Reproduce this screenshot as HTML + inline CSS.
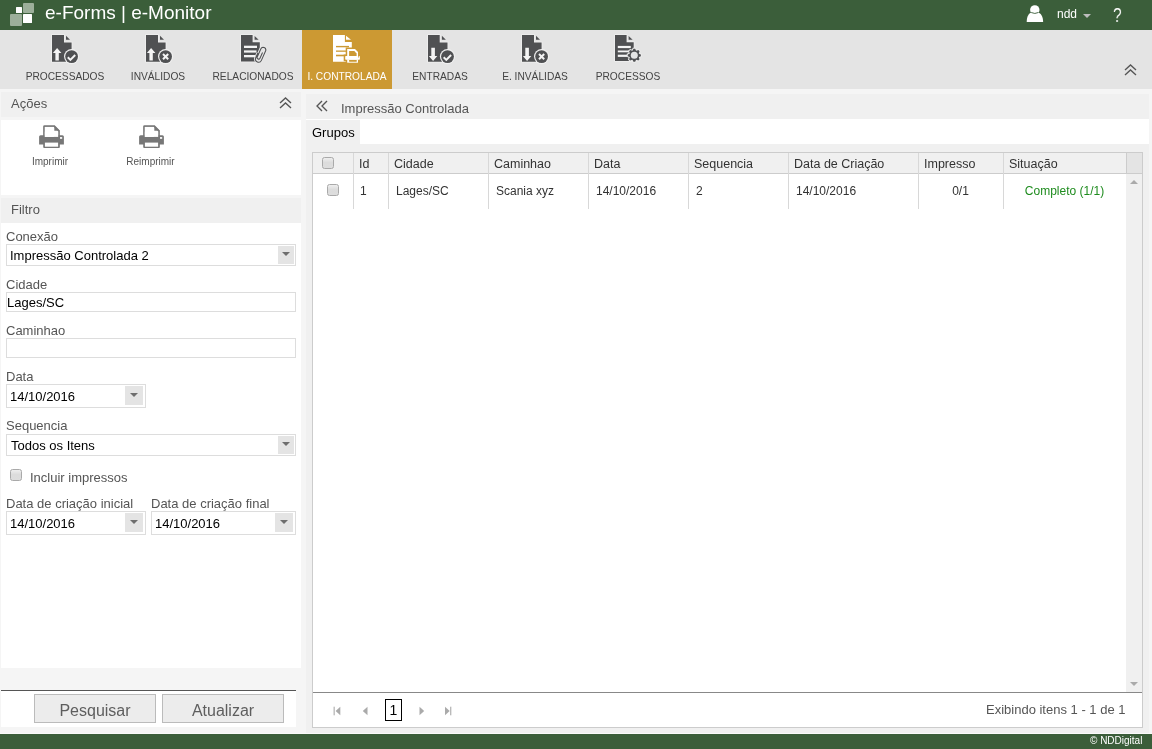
<!DOCTYPE html>
<html><head><meta charset="utf-8">
<style>
*{margin:0;padding:0;box-sizing:border-box}
html,body{width:1152px;height:749px;overflow:hidden;background:#f5f5f5;font-family:"Liberation Sans",sans-serif;position:relative}
.a{position:absolute}
.t{position:absolute;line-height:1;white-space:nowrap;will-change:transform}
.f13{font-size:13px}
.f12{font-size:12px}
.lbl{font-size:13px;color:#555}
.val{font-size:13px;color:#000}
.inp{position:absolute;background:#fff;border:1px solid #ddd}
.dd{position:absolute;background:#e4e4e4}
.dd:after{content:"";position:absolute;left:50%;top:50%;margin-left:-4px;margin-top:-3px;border-left:4px solid transparent;border-right:4px solid transparent;border-top:4.8px solid #6e6e6e}
.tb{font-size:10.2px;color:#444;text-align:center}
.vl{position:absolute;width:1px;background:#d8d8d8}
.hd{font-size:12.5px;color:#333}
.cell{font-size:12px;color:#333}
</style></head><body>
<!-- header -->
<div class="a" style="left:0;top:0;width:1152px;height:30px;background:#3b5e3a"></div>
<div class="a" style="left:10px;top:14px;width:12px;height:12px;background:#9caf9a;border-radius:1px"></div>
<div class="a" style="left:23px;top:3px;width:11px;height:10px;background:#9caf9a;border-radius:1px"></div>
<div class="a" style="left:16px;top:7.3px;width:6px;height:5.9px;background:#fff;border-radius:0.5px"></div>
<div class="a" style="left:23px;top:14.3px;width:9px;height:8.7px;background:#fff;border-radius:0.5px"></div>
<div class="t" style="left:45px;top:3.4px;font-size:19px;color:#fff">e-Forms | e-Monitor</div>

<svg class="a" style="left:1026px;top:4px" width="18" height="19" viewBox="0 0 18 19">
 <circle cx="8.8" cy="5.9" r="4.7" fill="#fff"/>
 <path d="M0.7,18 C0.7,12 3,8.6 6,8.4 L11.6,8.4 C14.6,8.6 17.1,12 17.1,18 Z" fill="#fff"/>
 <path d="M5.2,8.5 Q8.8,10.4 12.4,8.5" stroke="#3b5e3a" stroke-width="0.9" fill="none"/>
</svg>
<div class="t" style="left:1056.5px;top:8.4px;font-size:12px;color:#fff">ndd</div>
<div class="a" style="left:1082.5px;top:14px;width:0;height:0;border-left:4.3px solid transparent;border-right:4.3px solid transparent;border-top:4.3px solid #bdbdbd"></div>
<div class="t" style="left:1112.5px;top:3.5px;font-size:21px;color:#fff;transform:scaleX(0.74);transform-origin:0 0">?</div>

<!-- toolbar -->
<div class="a" style="left:0;top:30px;width:1152px;height:59px;background:#e4e4e4"></div>
<div class="a" style="left:302px;top:30px;width:90px;height:59px;background:#cc9933"></div>
<div class="t tb" style="left:15px;top:72px;width:100px">PROCESSADOS</div>
<div class="t tb" style="left:108px;top:72px;width:100px">INVÁLIDOS</div>
<div class="t tb" style="left:203px;top:72px;width:100px">RELACIONADOS</div>
<div class="t tb" style="left:297px;top:72px;width:100px;color:#fff">I. CONTROLADA</div>
<div class="t tb" style="left:390px;top:72px;width:100px">ENTRADAS</div>
<div class="t tb" style="left:485px;top:72px;width:100px">E. INVÁLIDAS</div>
<div class="t tb" style="left:578px;top:72px;width:100px">PROCESSOS</div>
<!-- icon1 processados -->
<svg class="a" style="left:51px;top:34px" width="30" height="31" viewBox="-1 -1 30 31">
 <path d="M0,0 H12 V7.5 H19.6 V26.7 H0 Z" fill="#505153" stroke="#efefef" stroke-width="1.6" paint-order="stroke"/>
 <path d="M14,0.8 L18,4.8 H14 Z" fill="#505153"/>
 <path d="M5.1,13.1 L9.4,17.9 H6.8 V25.6 H3.4 V17.9 H0.9 Z" fill="#f4f4f4"/>
 <circle cx="19.6" cy="21.6" r="7.6" fill="#f0f0f0"/>
 <circle cx="19.6" cy="21.6" r="6.4" fill="#505153"/>
 <path d="M15.8,22.3 L18.4,24.9 L23.2,20" stroke="#f4f4f4" stroke-width="2" fill="none"/>
</svg>
<!-- icon2 invalidos -->
<svg class="a" style="left:145px;top:34px" width="30" height="31" viewBox="-1 -1 30 31">
 <path d="M0,0 H12 V7.5 H19.6 V26.7 H0 Z" fill="#505153" stroke="#efefef" stroke-width="1.6" paint-order="stroke"/>
 <path d="M14,0.8 L18,4.8 H14 Z" fill="#505153"/>
 <path d="M5.1,13.1 L9.4,17.9 H6.8 V25.6 H3.4 V17.9 H0.9 Z" fill="#f4f4f4"/>
 <circle cx="19.6" cy="21.6" r="7.6" fill="#f0f0f0"/>
 <circle cx="19.6" cy="21.6" r="6.4" fill="#505153"/>
 <path d="M17,19 L22.2,24.2 M22.2,19 L17,24.2" stroke="#f4f4f4" stroke-width="2" fill="none"/>
</svg>
<!-- icon3 relacionados -->
<svg class="a" style="left:240px;top:34px" width="30" height="31" viewBox="-1 -1 30 31">
 <path d="M0,0 H11.6 V7.2 H18.8 V26.4 H0 Z" fill="#505153" stroke="#efefef" stroke-width="1.6" paint-order="stroke"/>
 <path d="M13.6,1 L17.6,4.8 H13.6 Z" fill="#505153"/>
 <rect x="3" y="10.7" width="13" height="2.3" fill="#f4f4f4"/>
 <rect x="3" y="15.4" width="12.5" height="2.2" fill="#f4f4f4"/>
 <rect x="3" y="20" width="11" height="2.3" fill="#f4f4f4"/>
 <g transform="translate(19.6,19.3) rotate(24)">
  <path d="M1,-2.5 V3.8 A1.5,1.5 0 0 1 -2,3.8 V-5 A2.6,2.6 0 0 1 3.2,-5 V5.2 A3.1,3.1 0 0 1 -3,5.2 V0" stroke="#e8e8e8" stroke-width="3" fill="none"/>
  <path d="M1,-2.5 V3.8 A1.5,1.5 0 0 1 -2,3.8 V-5 A2.6,2.6 0 0 1 3.2,-5 V5.2 A3.1,3.1 0 0 1 -3,5.2 V0" stroke="#505153" stroke-width="1.05" fill="none"/>
 </g>
</svg>
<!-- icon4 i. controlada -->
<svg class="a" style="left:332px;top:34px" width="30" height="31" viewBox="-1 -1 30 31">
 <path d="M0,0 H11.9 V6.9 H18.8 V26.7 H0 Z" fill="#fff"/>
 <path d="M13,0.8 L18,4.8 H13 Z" fill="#fff"/>
 <rect x="3" y="10.9" width="13" height="1.4" fill="#cc9933"/>
 <rect x="3" y="15.5" width="13" height="1.3" fill="#cc9933"/>
 <rect x="3" y="19.7" width="13" height="1.6" fill="#cc9933"/>
 <path d="M12.7,12.4 H22.6 L26.5,16.3 V19.5 H28.4 V26.25 H26.5 V29.2 H12.7 V26.25 H10.7 V19.5 H12.7 Z" fill="#cc9933"/>
 <path d="M14.2,21.2 V13.9 H22 L25,17 V21.2 Z" fill="#fff"/>
 <path d="M16.1,21.2 V16 H21.3 L23.6,18.4 V21.2 Z" fill="#cc9933"/>
 <rect x="12.2" y="21" width="14.7" height="3.8" rx="0.7" fill="#fff"/>
 <rect x="25" y="21.3" width="1.1" height="1.1" fill="#cc9933"/>
 <rect x="14.2" y="24.4" width="10.8" height="3.3" fill="#fff"/>
 <rect x="16.1" y="25" width="7.6" height="1.75" fill="#cc9933"/>
</svg>
<!-- icon5 entradas -->
<svg class="a" style="left:427px;top:34px" width="30" height="31" viewBox="-1 -1 30 31">
 <path d="M0,0 H11.7 V7.5 H19.5 V26.7 H0 Z" fill="#505153" stroke="#efefef" stroke-width="1.6" paint-order="stroke"/>
 <path d="M13.9,0.8 L17.9,4.8 H13.9 Z" fill="#505153"/>
 <path d="M5.1,25.9 L9.3,21.1 H6.9 V12.8 H3.3 V21.1 H0.9 Z" fill="#f4f4f4"/>
 <circle cx="19.5" cy="21.6" r="7.6" fill="#f0f0f0"/>
 <circle cx="19.5" cy="21.6" r="6.4" fill="#505153"/>
 <path d="M15.7,22.3 L18.3,24.9 L23.1,20" stroke="#f4f4f4" stroke-width="2" fill="none"/>
</svg>
<!-- icon6 e. invalidas -->
<svg class="a" style="left:521px;top:34px" width="30" height="31" viewBox="-1 -1 30 31">
 <path d="M0,0 H12 V7.5 H19.6 V26.7 H0 Z" fill="#505153" stroke="#efefef" stroke-width="1.6" paint-order="stroke"/>
 <path d="M14,0.8 L18,4.8 H14 Z" fill="#505153"/>
 <path d="M5.1,25.9 L9.3,21.1 H6.9 V12.8 H3.3 V21.1 H0.9 Z" fill="#f4f4f4"/>
 <circle cx="19.6" cy="21.6" r="7.6" fill="#f0f0f0"/>
 <circle cx="19.6" cy="21.6" r="6.4" fill="#505153"/>
 <path d="M17,19 L22.2,24.2 M22.2,19 L17,24.2" stroke="#f4f4f4" stroke-width="2" fill="none"/>
</svg>
<!-- icon7 processos -->
<svg class="a" style="left:614px;top:34px" width="30" height="31" viewBox="-1 -1 30 31">
 <path d="M0,0 H11.6 V7.2 H18.7 V25.9 H0 Z" fill="#505153" stroke="#efefef" stroke-width="1.6" paint-order="stroke"/>
 <path d="M13.6,1 L17.6,4.8 H13.6 Z" fill="#505153"/>
 <rect x="2.8" y="10.9" width="13" height="2.2" fill="#f4f4f4"/>
 <rect x="2.8" y="15.5" width="12" height="1.8" fill="#f4f4f4"/>
 <rect x="2.8" y="19.7" width="10" height="2.2" fill="#f4f4f4"/>
 <g transform="translate(19.3,20.3)">
  <path d="M4.71,-1.67 L6.54,-0.86 L6.54,0.86 L4.71,1.67 L4.51,2.15 L5.23,4.02 L4.02,5.23 L2.15,4.51 L1.67,4.71 L0.86,6.54 L-0.86,6.54 L-1.67,4.71 L-2.15,4.51 L-4.02,5.23 L-5.23,4.02 L-4.51,2.15 L-4.71,1.67 L-6.54,0.86 L-6.54,-0.86 L-4.71,-1.67 L-4.51,-2.15 L-5.23,-4.02 L-4.02,-5.23 L-2.15,-4.51 L-1.67,-4.71 L-0.86,-6.54 L0.86,-6.54 L1.67,-4.71 L2.15,-4.51 L4.02,-5.23 L5.23,-4.02 L4.51,-2.15 Z" fill="#505153" stroke="#ececec" stroke-width="2" paint-order="stroke"/>
  <circle r="3.5" fill="#e4e4e4"/>
 </g>
</svg>
<svg class="a" style="left:1124px;top:64px" width="13" height="12" viewBox="0 0 13 12">
 <path d="M1,6 L6.5,1 L12,6 M1,11 L6.5,6 L12,11" stroke="#555" stroke-width="1.35" fill="none"/>
</svg>

<!-- left panel -->
<div class="a" style="left:1px;top:92px;width:300px;height:25px;background:#f0f0f0"></div>
<div class="t lbl" style="left:11px;top:96.6px">Ações</div>
<svg class="a" style="left:278.5px;top:97px" width="13" height="12" viewBox="0 0 13 12">
 <path d="M1,6 L6.5,1 L12,6 M1,11 L6.5,6 L12,11" stroke="#555" stroke-width="1.35" fill="none"/>
</svg>
<div class="a" style="left:1px;top:120px;width:300px;height:75px;background:#fff"></div>
<svg class="a" style="left:39px;top:125px" width="26" height="24" viewBox="0 0 26 24">
 <path d="M5,11 V1.5 Q5,1.1 5.5,1.1 H15.3 L20,5.8 V11" stroke="#777" stroke-width="1.7" fill="none"/>
 <path d="M15.3,0.4 L20.7,5.8 H15.3 Z" fill="#777"/>
 <path d="M1.6,10.2 H23.4 Q24.9,10.2 24.9,11.7 V19.4 H0.1 V11.7 Q0.1,10.2 1.6,10.2 Z" fill="#777"/>
 <rect x="21" y="12.1" width="2.2" height="1.7" fill="#fff"/>
 <rect x="5.85" y="1.9" width="9" height="10" fill="#fff"/>
 <rect x="5.85" y="6.6" width="13.3" height="5.3" fill="#fff"/>
 <path d="M4.2,17 H20.85 V22 Q20.85,23 19.85,23 H5.2 Q4.2,23 4.2,22 Z" fill="#777"/>
 <rect x="5.9" y="17.6" width="13.2" height="4.1" fill="#fff"/>
</svg>
<svg class="a" style="left:139px;top:125px" width="26" height="24" viewBox="0 0 26 24">
 <path d="M5,11 V1.5 Q5,1.1 5.5,1.1 H15.3 L20,5.8 V11" stroke="#777" stroke-width="1.7" fill="none"/>
 <path d="M15.3,0.4 L20.7,5.8 H15.3 Z" fill="#777"/>
 <path d="M1.6,10.2 H23.4 Q24.9,10.2 24.9,11.7 V19.4 H0.1 V11.7 Q0.1,10.2 1.6,10.2 Z" fill="#777"/>
 <rect x="21" y="12.1" width="2.2" height="1.7" fill="#fff"/>
 <rect x="5.85" y="1.9" width="9" height="10" fill="#fff"/>
 <rect x="5.85" y="6.6" width="13.3" height="5.3" fill="#fff"/>
 <path d="M4.2,17 H20.85 V22 Q20.85,23 19.85,23 H5.2 Q4.2,23 4.2,22 Z" fill="#777"/>
 <rect x="5.9" y="17.6" width="13.2" height="4.1" fill="#fff"/>
</svg>
<div class="t" style="left:0px;top:156.5px;width:100px;text-align:center;font-size:10px;color:#555">Imprimir</div>
<div class="t" style="left:100px;top:156.5px;width:101px;text-align:center;font-size:10px;color:#555">Reimprimir</div>

<div class="a" style="left:1px;top:198px;width:300px;height:25px;background:#f0f0f0"></div>
<div class="t lbl" style="left:11px;top:202.7px">Filtro</div>
<div class="a" style="left:1px;top:223px;width:300px;height:445px;background:#fff"></div>

<div class="t lbl" style="left:6px;top:229.7px">Conexão</div>
<div class="inp" style="left:6px;top:244px;width:290px;height:22px"></div>
<div class="dd" style="left:278px;top:246px;width:16px;height:18px"></div>
<div class="t val" style="left:10px;top:249px">Impressão Controlada 2</div>

<div class="t lbl" style="left:6px;top:277.7px">Cidade</div>
<div class="inp" style="left:6px;top:292px;width:290px;height:20px"></div>
<div class="t val" style="left:6.5px;top:295.8px">Lages/SC</div>

<div class="t lbl" style="left:6px;top:323.9px">Caminhao</div>
<div class="inp" style="left:6px;top:338px;width:290px;height:20px"></div>

<div class="t lbl" style="left:6px;top:369.7px">Data</div>
<div class="inp" style="left:6px;top:384px;width:140px;height:24px"></div>
<div class="dd" style="left:125px;top:386px;width:18px;height:19px"></div>
<div class="t val" style="left:10px;top:390.2px">14/10/2016</div>

<div class="t lbl" style="left:6px;top:419.2px">Sequencia</div>
<div class="inp" style="left:6px;top:434px;width:290px;height:22px"></div>
<div class="dd" style="left:278px;top:436px;width:16px;height:18px"></div>
<div class="t val" style="left:11px;top:438.6px">Todos os Itens</div>

<div class="a" style="left:10px;top:469px;width:12px;height:12px;border:1px solid #a9a9a9;border-radius:2.5px;background:linear-gradient(#eeeeee,#dcdcdc 45%,#dddddd)"></div>
<div class="t lbl" style="left:29.5px;top:471px">Incluir impressos</div>

<div class="t lbl" style="left:6px;top:496.6px">Data de criação inicial</div>
<div class="inp" style="left:6px;top:511px;width:140px;height:24px"></div>
<div class="dd" style="left:125px;top:513px;width:18px;height:19px"></div>
<div class="t val" style="left:10px;top:517.3px">14/10/2016</div>

<div class="t lbl" style="left:151px;top:496.6px">Data de criação final</div>
<div class="inp" style="left:151px;top:511px;width:145px;height:24px"></div>
<div class="dd" style="left:275px;top:513px;width:18px;height:19px"></div>
<div class="t val" style="left:155px;top:517.3px">14/10/2016</div>

<div class="a" style="left:1px;top:690px;width:295px;height:1px;background:#555"></div>
<div class="a" style="left:1px;top:691px;width:295px;height:36px;background:#fff"></div>
<div class="a" style="left:34px;top:694px;width:122px;height:29px;background:#ececec;border:1px solid #bbb"></div>
<div class="t" style="left:34px;top:702.5px;width:122px;text-align:center;font-size:16px;color:#5e5e5e">Pesquisar</div>
<div class="a" style="left:162px;top:694px;width:122px;height:29px;background:#ececec;border:1px solid #bbb"></div>
<div class="t" style="left:162px;top:702.5px;width:122px;text-align:center;font-size:16px;color:#5e5e5e">Atualizar</div>

<!-- right panel -->
<div class="a" style="left:306px;top:94px;width:843px;height:25px;background:#f0f0f0"></div>
<svg class="a" style="left:316px;top:100px" width="12" height="12" viewBox="0 0 12 12">
 <path d="M6,1 L1,6 L6,11 M11,1 L6,6 L11,11" stroke="#555" stroke-width="1.35" fill="none"/>
</svg>
<div class="t lbl" style="left:340.5px;top:102px">Impressão Controlada</div>
<div class="a" style="left:306px;top:119px;width:843px;height:25px;background:#fff"></div>
<div class="a" style="left:306px;top:120px;width:54px;height:24px;background:#f0f0f0"></div>
<div class="t val" style="left:311.5px;top:125.6px">Grupos</div>
<div class="a" style="left:306px;top:144px;width:843px;height:589px;background:#f0f0f0"></div>

<!-- grid -->
<div class="a" style="left:312px;top:152px;width:831px;height:576px;background:#fff;border:1px solid #ccc"></div>
<div class="a" style="left:313px;top:153px;width:829px;height:20px;background:#f0f0f0"></div>
<div class="a" style="left:313px;top:173px;width:829px;height:1px;background:#ccc"></div>
<div class="a" style="left:1126px;top:174px;width:16px;height:518px;background:#f0f0f0"></div>
<div class="a" style="left:1126px;top:153px;width:16px;height:20px;background:#e4e4e4;border-left:1px solid #ccc"></div>
<div class="vl" style="left:353px;top:153px;height:56px"></div>
<div class="vl" style="left:388px;top:153px;height:56px"></div>
<div class="vl" style="left:488px;top:153px;height:56px"></div>
<div class="vl" style="left:588px;top:153px;height:56px"></div>
<div class="vl" style="left:688px;top:153px;height:56px"></div>
<div class="vl" style="left:788px;top:153px;height:56px"></div>
<div class="vl" style="left:918px;top:153px;height:56px"></div>
<div class="vl" style="left:1003px;top:153px;height:56px"></div>

<div class="a" style="left:322px;top:157px;width:12px;height:12px;border:1px solid #a9a9a9;border-radius:2.5px;background:linear-gradient(#eeeeee,#dcdcdc 45%,#dddddd)"></div>
<div class="t hd" style="left:359px;top:158.2px">Id</div>
<div class="t hd" style="left:394px;top:158.2px">Cidade</div>
<div class="t hd" style="left:494px;top:158.2px">Caminhao</div>
<div class="t hd" style="left:594px;top:158.2px">Data</div>
<div class="t hd" style="left:694px;top:158.2px">Sequencia</div>
<div class="t hd" style="left:794px;top:158.2px">Data de Criação</div>
<div class="t hd" style="left:924px;top:158.2px">Impresso</div>
<div class="t hd" style="left:1009px;top:158.2px">Situação</div>

<div class="a" style="left:327px;top:184px;width:12px;height:12px;border:1px solid #a9a9a9;border-radius:2.5px;background:linear-gradient(#eeeeee,#dcdcdc 45%,#dddddd)"></div>
<div class="t cell" style="left:360px;top:184.6px">1</div>
<div class="t cell" style="left:396px;top:184.6px">Lages/SC</div>
<div class="t cell" style="left:496px;top:184.6px">Scania xyz</div>
<div class="t cell" style="left:596px;top:184.6px">14/10/2016</div>
<div class="t cell" style="left:696px;top:184.6px">2</div>
<div class="t cell" style="left:796px;top:184.6px">14/10/2016</div>
<div class="t cell" style="left:918px;top:184.6px;width:85px;text-align:center">0/1</div>
<div class="t cell" style="left:1003px;top:184.6px;width:123px;text-align:center;color:#1f8c1f">Completo (1/1)</div>

<div class="a" style="left:1130px;top:180px;width:0;height:0;border-left:4px solid transparent;border-right:4px solid transparent;border-bottom:4px solid #aaa"></div>
<div class="a" style="left:1130px;top:682px;width:0;height:0;border-left:4px solid transparent;border-right:4px solid transparent;border-top:4px solid #aaa"></div>

<!-- pager -->
<div class="a" style="left:313px;top:692px;width:829px;height:1px;background:#888"></div>
<svg class="a" style="left:330px;top:704px" width="125" height="14" viewBox="330 704 125 14">
 <rect x="333.6" y="706.7" width="1.1" height="8.6" fill="#aaa"/>
 <path d="M340.3,706.7 V715.3 L335.6,711 Z" fill="#aaa"/>
 <path d="M367.5,706.7 V715.3 L362.8,711 Z" fill="#aaa"/>
 <path d="M419.5,706.7 V715.3 L424.2,711 Z" fill="#aaa"/>
 <path d="M445,706.7 V715.3 L449.7,711 Z" fill="#aaa"/>
 <rect x="450.2" y="706.7" width="1.1" height="8.6" fill="#aaa"/>
</svg>
<div class="a" style="left:385px;top:699px;width:17px;height:22px;border:1px solid #000"></div>
<div class="t" style="left:385px;top:703.4px;width:17px;text-align:center;color:#000;font-size:14px">1</div>
<div class="t" style="left:986px;top:702.8px;font-size:13px;color:#555">Exibindo itens 1 - 1 de 1</div>

<!-- footer -->
<div class="a" style="left:0;top:733px;width:1152px;height:1px;background:#fafafa"></div>
<div class="a" style="left:0;top:734px;width:1152px;height:15px;background:#3b5e3a"></div>
<div class="t" style="left:1090px;top:736.1px;font-size:10px;color:#fff">© NDDigital</div>
</body></html>
